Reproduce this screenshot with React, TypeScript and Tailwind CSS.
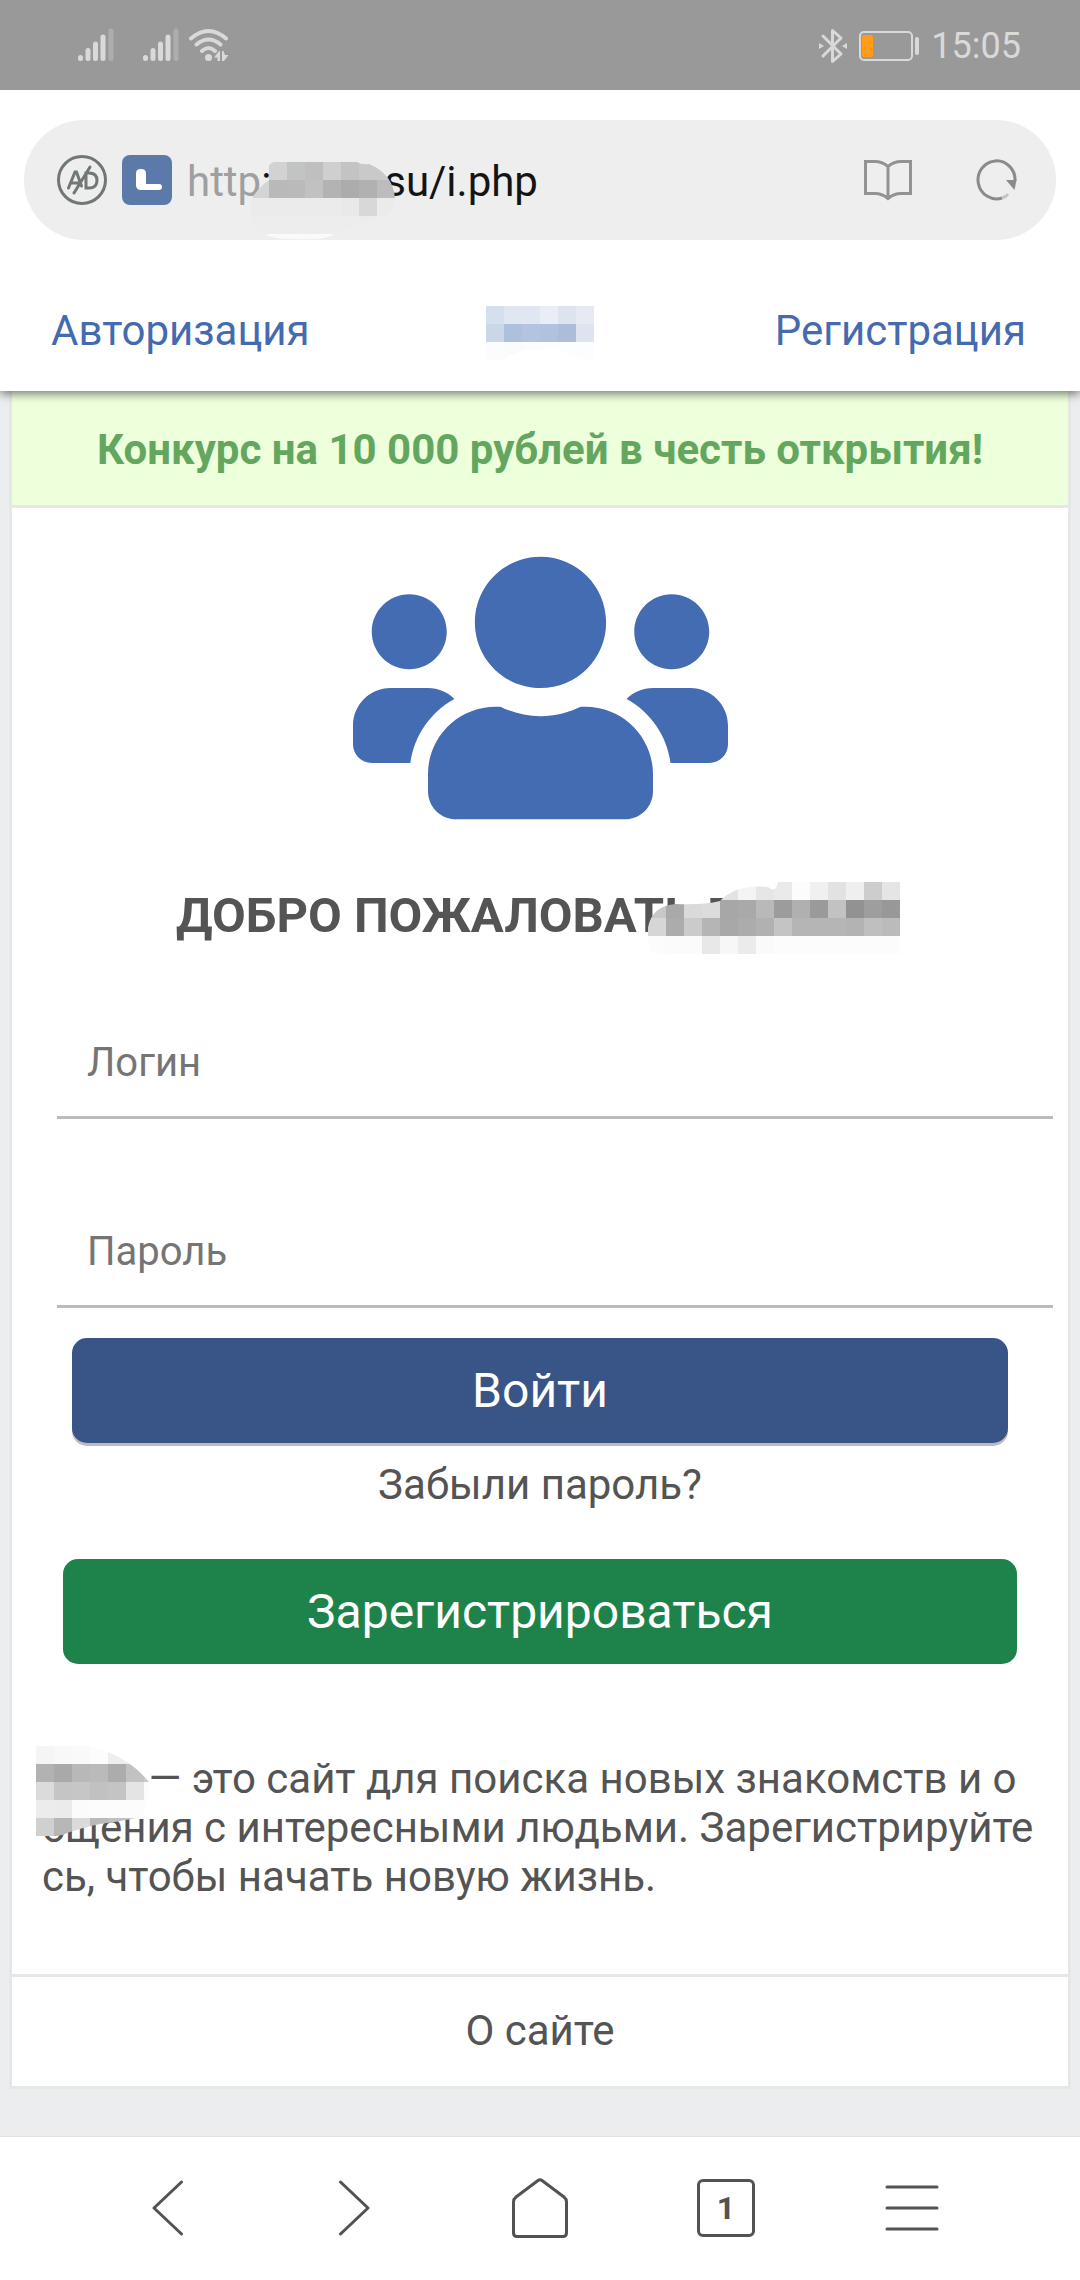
import { useId } from "react";
import { FaUsers } from "react-icons/fa";

const CELL = 18;

type MosaicProps = {
  rows: string[][];
  clip: string;
  className?: string;
};

/** Pixelated patch that hides a piece of text */
function Mosaic({ rows, clip, className }: MosaicProps) {
  const id = useId();
  const width = rows[0].length * CELL;
  const height = rows.length * CELL;

  return (
    <svg
      aria-hidden="true"
      width={width}
      height={height}
      viewBox={`0 0 ${width} ${height}`}
      shapeRendering="crispEdges"
      className={className}
    >
      <clipPath id={id}>
        <path d={clip} />
      </clipPath>
      <g clipPath={`url(#${id})`}>
        {rows.map((row, y) =>
          row.map((fill, x) => (
            <rect key={`${x}-${y}`} x={x * CELL} y={y * CELL} width={CELL} height={CELL} fill={fill} />
          ))
        )}
      </g>
    </svg>
  );
}

const urlMosaic = [
  ["#eee", "#d2d2d2", "#c2c3c3", "#bfbfbf", "#cfcfcf", "#c3c3c3", "#c8c9c9", "#c8c9c9"],
  ["#d3d5d5", "#b9b9b9", "#bababa", "#c1c1c1", "#b3b3b3", "#acacac", "#b1b1b1", "#bcbcbc"],
  ["#ebebeb", "#ebebeb", "#ebebeb", "#ebebeb", "#ebebeb", "#e9e9e9", "#d8d8d8", "#ebebeb"],
  ["#ededed", "#ededed", "#ededed", "#ededed", "#ededed", "#ededed", "#ececec", "#ededed"],
  ["#fafafa", "#fafafa", "#fafafa", "#fafafa", "#fafafa", "#fafafa", "#fafafa", "#fafafa"],
];

const logoMosaic = [
  ["#d6dfee", "#e1e7f2", "#e1e7f2", "#e9edf5", "#dde4ef", "#e5eaf3"],
  ["#cad7e8", "#aec1dc", "#b4c3df", "#b0c3de", "#adbdd9", "#dde4f0"],
  ["#fbfcfd", "#fafbfd", "#fbfcfd", "#fcfdfe", "#fcfdfe", "#fcfdfe"],
];

const titleMosaic = [
  ["#fff", "#fff", "#fff", "#fff", "#e3e3e3", "#f4f4f4", "#e6e6e6", "#eaeaea", "#fcfcfc", "#f0f0f0", "#e2e2e2", "#efefef", "#cdcdcd", "#e5e5e5"],
  ["#c8c8c8", "#a9a9a9", "#dadada", "#dcdcdc", "#a7a7a7", "#a9a9a9", "#b9b9b9", "#9c9c9c", "#b0b0b0", "#9a9a9a", "#c2c2c2", "#929292", "#9e9e9e", "#989898"],
  ["#d6d6d6", "#acacac", "#cbcbcb", "#b5b5b5", "#a8a8a8", "#acacac", "#b1b1b1", "#c4c4c4", "#b5b5b5", "#b5b5b5", "#b5b5b5", "#b3b3b3", "#bfbfbf", "#bbb"],
  ["#fcfcfc", "#fbfbfb", "#fbfbfb", "#e8e8e8", "#f7f7f7", "#ebebeb", "#fafafa", "#fcfcfc", "#fcfcfc", "#fcfcfc", "#fcfcfc", "#fcfcfc", "#fcfcfc", "#fcfcfc"],
];

const aboutMosaic = [
  ["#f5f5f5", "#f8f8f8", "#f9f9f9", "#fcfcfc", "#eee", "#eee", "#eee"],
  ["#b2b2b2", "#a9a9a9", "#b8b8b8", "#bababa", "#acacac", "#c2c2c2", "#c9c9c9"],
  ["#dbdbdb", "#c5c5c5", "#c6c6c6", "#c1c1c1", "#c4c4c4", "#e4e4e4", "#fcfcfc"],
  ["#ececec", "#ebebeb", "#fbfbfb", "#fcfcfc", "#fcfcfc", "#fcfcfc", "#fcfcfc"],
  ["#d0d0d0", "#b7b7b7", "#dadada", "#bababa", "#c0c0c0", "#c6c6c6", "#fcfcfc"],
];

function SignalIcon() {
  return (
    <svg width="36" height="34" viewBox="0 0 36 34" strokeWidth="5" strokeLinecap="round" stroke="#d9d9d9" aria-hidden="true">
      <path d="M2.500 29.500v1M10 22.500v8M17.500 16v14.500M25 9v21.500" />
      <path d="M33 3v27.500" stroke="#adadad" />
    </svg>
  );
}

function WifiIcon() {
  return (
    <svg width="40" height="34" viewBox="0 0 40 34" fill="none" stroke="#d9d9d9" strokeWidth="4" strokeLinecap="round" aria-hidden="true">
      <path d="M2 10.500Q19.500-4.500 37 10.500M7.500 16.500Q19.500 6.500 31.500 16.500M13 23Q19.500 17 26 23" />
      <circle cx="19.500" cy="29.500" r="3.500" fill="#d9d9d9" stroke="none" />
      <path d="M25 29.500l5-6.500h1v10h-2.500v-3.500zM33 23h1.500l1.500 4h3.500L35 33h-2z" fill="#d9d9d9" stroke="none" />
    </svg>
  );
}

function BluetoothIcon() {
  return (
    <svg width="28" height="36" viewBox="0 0 28 36" fill="none" stroke="#d9d9d9" strokeWidth="3" strokeLinecap="round" strokeLinejoin="round" aria-hidden="true">
      <path d="M4 8l18 18-8.500 7.500V2.500L22 10 4 28" />
      <path d="M0 15l5 3-5 3zM28 15l-5 3 5 3z" fill="#d9d9d9" stroke="none" />
    </svg>
  );
}

function BatteryIcon() {
  return (
    <svg width="60" height="30" viewBox="0 0 60 30" aria-hidden="true">
      <rect x="1" y="1" width="52" height="28" rx="4" fill="none" stroke="#d9d9d9" strokeWidth="2" />
      <rect x="3" y="4" width="11" height="22" rx="2" fill="#ff9c1a" />
      <rect x="56" y="6" width="4" height="18" rx="2" fill="#d9d9d9" />
    </svg>
  );
}

function StatusBar() {
  return (
    <header className="flex h-[90px] items-center justify-between bg-[#999] pr-[59px] pl-[78px]">
      <div className="flex items-center">
        <SignalIcon />
        <span className="ml-[29px]">
          <SignalIcon />
        </span>
        <span className="ml-2.5">
          <WifiIcon />
        </span>
      </div>
      <div className="flex items-center gap-3 pt-0.5 text-[36px] leading-10 text-[#d9d9d9]">
        <BluetoothIcon />
        <BatteryIcon />
        <time>15:05</time>
      </div>
    </header>
  );
}

function AdBlockIcon() {
  return (
    <svg width="50" height="50" viewBox="0 0 50 50" fill="none" stroke="#717776" strokeWidth="3" strokeLinecap="round" aria-hidden="true">
      <circle cx="25" cy="25" r="23.500" />
      <path d="M11.500 33l6.500-16h1.500l5 14M14 28h8M29 18v15h3q8 0 8-7.500T32 18zM33 12L17 38" />
    </svg>
  );
}

function SiteIcon() {
  return (
    <svg width="50" height="50" viewBox="0 0 50 50" aria-hidden="true">
      <rect width="50" height="50" rx="8" fill="#5b7aa9" />
      <path d="M14 18q0-4 5-4t5 4v11h13q3 0 3 3t-3 3H19q-5 0-5-5z" fill="#fff" />
    </svg>
  );
}

function BookIcon() {
  return (
    <svg width="48" height="42" viewBox="0 0 48 42" fill="none" stroke="#929292" strokeWidth="3" aria-hidden="true">
      <path d="M24 7.500Q18 2.500 11 2.500H1.500v32H11q7 0 13 5 6-5 13-5h9.500v-32H37Q30 2.500 24 7.500zV39" />
    </svg>
  );
}

function ReloadIcon() {
  return (
    <svg width="42" height="42" viewBox="0 0 42 42" fill="none" stroke="#8a8a8a" strokeWidth="3" aria-hidden="true">
      <path d="M39 22A18.500 19 0 1 0 26 39" />
      <path d="M26 39q4-1 6-4" stroke="#c4c4c4" />
      <path d="M30 21h10.500l-2 10z" fill="#8a8a8a" stroke="none" />
    </svg>
  );
}

function AddressBar() {
  return (
    <div className="relative z-20 bg-white px-6 py-[30px]">
      <div className="flex h-[120px] items-center rounded-full bg-[#eee] pr-[38px] pl-[33px]">
        <button type="button" aria-label="Блокировка рекламы">
          <AdBlockIcon />
        </button>
        <span className="ml-[15px]">
          <SiteIcon />
        </span>
        <button type="button" className="ml-[15px] flex flex-1 items-center pt-1 text-[42px] leading-[60px] text-[#141414]">
          <span className="text-[#9e9f9f]">http</span>
          <span className="relative w-[123px] text-left">
            :
            <Mosaic
              rows={urlMosaic}
              clip="M-3 55Q-4 34 18 18V4Q20 0 24 0H106Q110 3 118 2Q142 12 144 36Q144 54 126 56Q108 62 84 72Q74 78 56 77Q22 78 14 72Q-2 66 0 55z"
              className="absolute top-[10px] -left-[10px]"
            />
          </span>
          <span>su/i.php</span>
        </button>
        <button type="button" aria-label="Режим чтения">
          <BookIcon />
        </button>
        <button type="button" aria-label="Обновить" className="ml-16">
          <ReloadIcon />
        </button>
      </div>
    </div>
  );
}

function SiteNav() {
  return (
    <nav className="relative z-10 flex h-[121px] items-center justify-between bg-white pr-[54px] pl-[51px] text-[42px] leading-[49px] text-[#446bb0] shadow-[0_3px_9px_rgba(0,0,0,0.5)]">
      <a href="#login">Авторизация</a>
      <Mosaic rows={logoMosaic} clip="M0 0H108V54H96Q78 42 64 43Q30 42 18 54H0z" className="absolute top-9 left-1/2 -translate-x-1/2" />
      <a href="#register">Регистрация</a>
    </nav>
  );
}

function LoginForm() {
  const field =
    "block h-[111px] w-full border-b-[3px] border-[#bbb] bg-transparent px-[30px] text-[40px] text-[#545454] outline-none placeholder:text-[#757575]";

  return (
    <form id="login" className="mt-[62px]" onSubmit={(e) => e.preventDefault()}>
      <div className="flex flex-col gap-[78px] pr-[15px] pl-[45px]">
        <input className={field} type="text" name="login" placeholder="Логин" aria-label="Логин" />
        <input className={field} type="password" name="password" placeholder="Пароль" aria-label="Пароль" />
      </div>
      <div className="mt-[30px] px-[60px]">
        <button
          type="submit"
          className="h-[105px] w-full rounded-[15px] bg-[#395486] text-[48px] text-white shadow-[0_3px_0_#bbbbc6]"
        >
          Войти
        </button>
      </div>
    </form>
  );
}

function Toolbar() {
  return (
    <nav className="flex h-36 border-t border-[#e2e2e2] bg-white px-[75px] pb-0.5 text-[#525252]">
      <button type="button" aria-label="Назад" className="flex flex-1 items-center justify-center">
        <svg width="32" height="56" viewBox="0 0 32 56" fill="none" stroke="currentColor" strokeWidth="3" strokeLinecap="round" strokeLinejoin="round">
          <path d="M29.500 2L2 28l27.500 26" />
        </svg>
      </button>
      <button type="button" aria-label="Вперёд" className="flex flex-1 items-center justify-center">
        <svg width="32" height="56" viewBox="0 0 32 56" fill="none" stroke="currentColor" strokeWidth="3" strokeLinecap="round" strokeLinejoin="round">
          <path d="M2.500 2L30 28 2.500 54" />
        </svg>
      </button>
      <button type="button" aria-label="Домой" className="flex flex-1 items-center justify-center">
        <svg width="56" height="60" viewBox="0 0 56 60" fill="none" stroke="currentColor" strokeWidth="3" strokeLinejoin="round">
          <path d="M26 2.500q2-1.500 4 0L52 19q2.500 2 2.500 5v31q0 3.500-3.500 3.500H5q-3.500 0-3.500-3.500V24q0-3 2.500-5z" />
        </svg>
      </button>
      <button type="button" aria-label="Вкладки" className="flex flex-1 items-center justify-center">
        <span className="flex size-[58px] items-center justify-center rounded-md border-[3px] border-current text-[32px] font-bold">
          1
        </span>
      </button>
      <button type="button" aria-label="Меню" className="flex flex-1 items-center justify-center">
        <svg width="54" height="46" viewBox="0 0 54 46" stroke="currentColor" strokeWidth="3" strokeLinecap="round">
          <path d="M2 2h50M2 23h50M2 44h50" />
        </svg>
      </button>
    </nav>
  );
}

export default function App() {
  return (
    <div className="flex min-h-screen flex-col bg-white font-[Roboto,sans-serif]">
      <StatusBar />
      <AddressBar />
      <SiteNav />

      <main className="flex-1 bg-[#ebedee] px-[9px] pb-[47px]">
        <div className="border-x-[3px] border-b-[3px] border-[#e6e7e7] bg-white text-[42px] leading-[49px] text-[#545454]">
          <p className="border-b-[3px] border-[#e6e7e7] bg-[#eeffdb] pt-[34px] pb-[31px] text-center font-bold text-[#63a75f]">
            Конкурс на 10 000 рублей в честь открытия!
          </p>

          <section className="pt-[30px] pb-[73px]">
            <FaUsers className="mx-auto h-[300px] w-[375px] text-[#446cb2]" aria-hidden="true" />

            <h1 className="relative mx-auto mt-12 w-[728px] text-[49px] leading-[60px] font-bold whitespace-nowrap">
              ДОБРО ПОЖАЛОВАТЬ В
              <Mosaic
                rows={titleMosaic}
                clip="M-1 56Q-1 24 28 22Q56 23 72 19Q88 2 120 5Q128 12 130 0H252V72H6Q0 66 0 56z"
                className="absolute -top-1 right-1"
              />
            </h1>

            <LoginForm />

            <p className="mt-[17px] text-center">
              <a href="#restore">Забыли пароль?</a>
            </p>

            <div className="mt-[50px] px-[51px]">
              <button id="register" type="button" className="h-[105px] w-full rounded-[15px] bg-[#1e834b] text-[48px] text-white">
                Зарегистрироваться
              </button>
            </div>

            <p className="relative mt-[90px] pr-[31px] pl-[30px] break-all">
              <span className="inline-block w-24" /> — это сайт для поиска новых знакомств и общения с
              интересными людьми. Зарегистрируйтесь, чтобы начать новую жизнь.
              <Mosaic
                rows={aboutMosaic}
                clip="M0 0H52Q90 8 113 36Q114 54 106 70Q100 73 64 78Q44 82 26 89Q12 92 0 90z"
                className="absolute -top-2 left-6"
              />
            </p>
          </section>

          <footer className="border-t-[3px] border-[#e6e7e7] pt-[29px] pb-[31px] text-center">
            <a href="#about">О сайте</a>
          </footer>
        </div>
      </main>

      <Toolbar />
    </div>
  );
}
